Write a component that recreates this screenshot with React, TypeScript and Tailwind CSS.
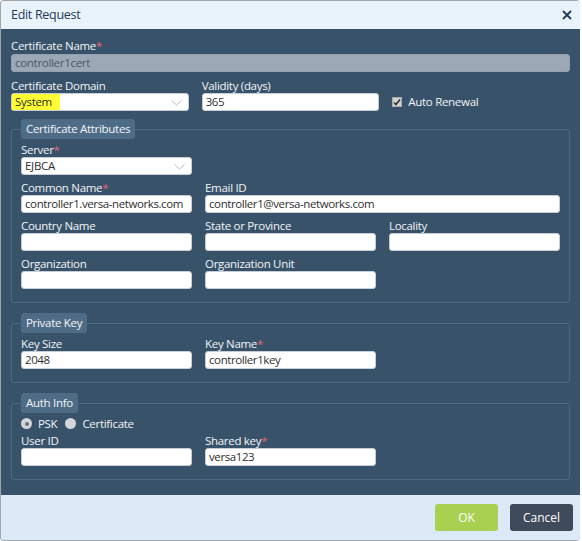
import React from 'react';

const font = { fontFamily: '"Open Sans", "Noto Sans", sans-serif' };

const Label = ({ text, required }: { text: string; required?: boolean }) => (
  <div className="h-[14px] leading-[14px] text-[11.5px] tracking-[-0.3px] text-[#f2f5f8] whitespace-nowrap">
    {text}
    {required && <span className="text-[#e2647c]">*</span>}
  </div>
);

const Input = ({ value = '' }: { value?: string }) => (
  <div className="h-[18px] bg-white border border-[#c5ced7] rounded-[3px] px-[3px] text-[11.5px] tracking-[-0.4px] leading-[16px] text-[#2f2f2f] whitespace-nowrap overflow-hidden">
    {value}
  </div>
);

const Chevron = () => (
  <svg width="11" height="6" viewBox="0 0 11 6" className="absolute right-[6px] top-[6px]">
    <path d="M0.5 0.5 L5.5 5 L10.5 0.5" fill="none" stroke="#b4bcc4" strokeWidth="1" />
  </svg>
);

const Select = ({ value, highlight }: { value: string; highlight?: boolean }) => (
  <div className="relative h-[18px] bg-white border border-[#c5ced7] rounded-[3px] text-[11.5px] tracking-[-0.3px] leading-[16px] text-[#2f2f2f]">
    {highlight ? (
      <span className="inline-block bg-[#ffff33] pl-[3px] w-[48px] h-[16px]">{value}</span>
    ) : (
      <span className="pl-[3px]">{value}</span>
    )}
    <Chevron />
  </div>
);

const Field = ({
  label,
  required,
  value,
  className = ''
}: {
  label: string;
  required?: boolean;
  value?: string;
  className?: string;
}) => (
  <div className={className}>
    <Label text={label} required={required} />
    <Input value={value} />
  </div>
);

const Group = ({ title, children }: { title: string; children: React.ReactNode }) => (
  <fieldset className="border border-[#4d6880] rounded-[3px] px-[9px] pb-[13px]">
    <legend className="bg-[#4f6c87] rounded-[3px] px-[5px] h-[20px] leading-[20px] text-[11.5px] tracking-[-0.3px] text-[#f2f5f8]">
      {title}
    </legend>
    <div className="pt-[4px] flex flex-col gap-[6px]">{children}</div>
  </fieldset>
);

const Radio = ({ checked, label }: { checked?: boolean; label: string }) => (
  <div className="flex items-center gap-[6px]">
    <div className="w-[11px] h-[11px] rounded-full bg-[#d3d6d9] flex items-center justify-center">
      {checked && <div className="w-[4px] h-[4px] rounded-full bg-[#6b6f73]" />}
    </div>
    <span>{label}</span>
  </div>
);

export default function App() {
  return (
    <div className="w-[582px] h-[541px] bg-white" style={font}>
      <div className="w-[580px] h-[541px] flex flex-col border-l border-t border-b border-[#a3a6a9] rounded-[4px] overflow-hidden">
        <header className="h-[28px] bg-[#e9f3fc] flex items-center justify-between pl-[10px] pr-[8px] shrink-0">
          <span className="text-[12.5px] tracking-[-0.3px] text-[#1e3a56]">Edit Request</span>
          <svg width="10" height="10" viewBox="0 0 10 10">
            <path d="M1 1 L9 9 M9 1 L1 9" stroke="#1e3a56" strokeWidth="1.8" />
          </svg>
        </header>

        <main className="flex-1 bg-[#385269] px-[10px] pt-[10px] flex flex-col">
          <Label text="Certificate Name" required />
          <div className="mt-[1px] h-[18px] bg-[#9ba8b5] border border-[#93a1ae] rounded-[3px] px-[3px] text-[11.5px] tracking-[-0.3px] leading-[16px] text-[#4b5866]">
            controller1cert
          </div>

          <div className="mt-[7px] grid grid-cols-3 gap-x-[13px]">
            <div>
              <Label text="Certificate Domain" />
              <Select value="System" highlight />
            </div>
            <Field label="Validity (days)" value="365" />
            <div className="flex flex-col justify-end">
              <div className="h-[18px] flex items-center gap-[6px] text-[11.5px] tracking-[-0.3px] text-[#f2f5f8]">
                <div className="w-[10px] h-[10px] bg-[#cfd1d3] border border-[#a8abae] flex items-center justify-center">
                  <svg width="8" height="8" viewBox="0 0 8 8">
                    <path d="M1 4.5 L3 6.5 L7 1.5" fill="none" stroke="#333" strokeWidth="1.6" />
                  </svg>
                </div>
                Auto Renewal
              </div>
            </div>
          </div>

          <div className="mt-[8px] flex flex-col gap-[10px]">
            <Group title="Certificate Attributes">
              <div className="grid grid-cols-3 gap-x-[13px]">
                <div>
                  <Label text="Server" required />
                  <Select value="EJBCA" />
                </div>
              </div>
              <div className="grid grid-cols-3 gap-x-[13px]">
                <Field label="Common Name" required value="controller1.versa-networks.com" />
                <Field label="Email ID" value="controller1@versa-networks.com" className="col-span-2" />
              </div>
              <div className="grid grid-cols-3 gap-x-[13px]">
                <Field label="Country Name" />
                <Field label="State or Province" />
                <Field label="Locality" />
              </div>
              <div className="grid grid-cols-3 gap-x-[13px]">
                <Field label="Organization" />
                <Field label="Organization Unit" />
              </div>
            </Group>

            <Group title="Private Key">
              <div className="grid grid-cols-3 gap-x-[13px]">
                <Field label="Key Size" value="2048" />
                <Field label="Key Name" required value="controller1key" />
              </div>
            </Group>

            <Group title="Auth Info">
              <div className="flex flex-col gap-[4px]">
                <div className="flex items-center gap-[8px] h-[13px] text-[11.5px] tracking-[-0.3px] text-[#f2f5f8]">
                  <Radio checked label="PSK" />
                  <Radio label="Certificate" />
                </div>
                <div className="grid grid-cols-3 gap-x-[13px]">
                  <Field label="User ID" />
                  <Field label="Shared key" required value="versa123" />
                </div>
              </div>
            </Group>
          </div>
        </main>

        <footer className="h-[45px] shrink-0 bg-[#dbeaf6] flex items-center justify-end gap-[12px] pr-[7px]">
          <button className="w-[63px] h-[27px] rounded-[3px] bg-[#a9d051] text-white text-[12px]">OK</button>
          <button className="w-[63px] h-[27px] rounded-[3px] bg-[#3f4a5b] text-white text-[12px]">Cancel</button>
        </footer>
      </div>
    </div>
  );
}
